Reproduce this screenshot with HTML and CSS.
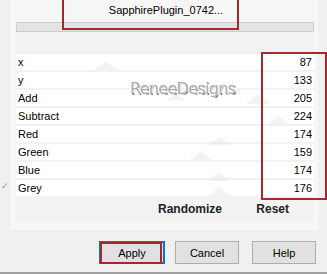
FILE: index.html
```html
<!DOCTYPE html>
<html lang="en">
<head>
  <meta charset="utf-8">
  <title>Sapphire Plugin Settings</title>
  <link rel="stylesheet" href="styles.css">
</head>
<body>
  <div class="window">
    <div class="main">
      <div class="side"><span class="tick">&#10003;</span></div>
      <div class="frame">
        <div class="panel">
          <div class="preset">SapphirePlugin_0742...</div>
          <div class="slider"></div>
          <div class="rows">
            <div class="row"><span>x</span><span>87</span></div>
            <div class="row"><span>y</span><span>133</span></div>
            <div class="row"><span>Add</span><span>205</span></div>
            <div class="row"><span>Subtract</span><span>224</span></div>
            <div class="row"><span>Red</span><span>174</span></div>
            <div class="row"><span>Green</span><span>159</span></div>
            <div class="row"><span>Blue</span><span>174</span></div>
            <div class="row"><span>Grey</span><span>176</span></div>
          </div>
          <div class="tools">
            <span class="randomize">Randomize</span>
            <span class="reset">Reset</span>
          </div>
          <svg class="shapes" width="298" height="223" viewBox="0 0 298 223">
            <polygon points="90,62 102,70 78,70" />
            <polygon points="242,94 254,104 230,104" />
            <polygon points="262,115 272,124 252,124" />
            <polygon points="203,137 215,145 191,145" />
            <polygon points="185,151 196,160 174,160" />
            <polygon points="203,172 214,181 192,181" />
            <polygon points="203,187 214,196 192,196" />
            <polygon points="160,94 170,100 150,100" />
          </svg>
          <div class="mark mark-preset"></div>
        </div>
      </div>
    </div>
    <div class="buttons">
      <button class="btn btn-default">Apply<span class="mark mark-apply"></span></button>
      <button class="btn">Cancel</button>
      <button class="btn btn-help">Help</button>
    </div>
    <div class="watermark">ReneeDesigns</div>
    <div class="mark mark-values"></div>
  </div>
</body>
</html>
```

FILE: styles.css
```css
body {
  margin: 0;
  background-color: #f0f0f0;
  font-family: "Liberation Sans", Arial, sans-serif;
  font-size: 11px;
  color: #000;
}
.window {
  position: relative;
  height: 272px;
  border-bottom: 2px solid #a0a0a0;
}
.main { display: flex; }
.side { width: 11px; position: relative; }
.tick {
  position: absolute;
  top: 181px;
  left: 1px;
  font-size: 9px;
  color: #9a9a9a;
}
.frame {
  width: 307px;
  height: 230px;
  padding: 0 5px 0 4px;
  background: #f7f7f7;
  border-left: 1px solid #fbfbfb;
  box-sizing: border-box;
}
.panel {
  position: relative;
  width: 298px;
  height: 223px;
  background: #f2f2f2;
}
.preset {
  height: 22px;
  line-height: 20px;
  text-align: center;
  background: #f6f6f6;
  padding-left: 2px;
}
.slider {
  height: 8px;
  background: #e4e4e4;
  border: 1px solid #cdcdcd;
}
.rows {
  margin-top: 22px;
  display: flex;
  flex-direction: column;
  gap: 2px;
}
.row {
  height: 16px;
  line-height: 16px;
  background: #fff;
  display: flex;
  justify-content: space-between;
  padding: 0 2px;
}
.tools {
  height: 26px;
  line-height: 26px;
  font-size: 12px;
  font-weight: bold;
  color: #222;
}
.randomize { margin-left: 142px; }
.reset { margin-left: 31px; }
.shapes {
  position: absolute;
  top: 0;
  left: 0;
  pointer-events: none;
}
.shapes polygon { fill: #e4e4e4; opacity: 0.45; }
.buttons {
  display: flex;
  justify-content: flex-end;
  gap: 10px;
  padding: 11px 11px 0 0;
}
.btn {
  position: relative;
  width: 64px;
  height: 23px;
  background: #e1e1e1;
  border: 1px solid #adadad;
  font-family: "Liberation Sans", Arial, sans-serif;
  font-size: 11px;
  color: #000;
  padding: 0;
}
.btn-default {
  width: 66px;
  border: 1px solid #0078d7;
  box-shadow: inset 0 0 0 1px #0078d7;
}
.btn-help { margin-left: 3px; }
.watermark {
  position: absolute;
  left: 130px;
  top: 79px;
  font-family: "DejaVu Sans", sans-serif;
  font-size: 16px;
  letter-spacing: -0.7px;
  color: #ababab;
  text-shadow: -1px -1px 0 #fff, 1px -1px 0 #fff, -1px 1px 0 #fff, 1px 1px 0 #6e6e6e;
  pointer-events: none;
}
.mark {
  position: absolute;
  border: 2px solid #a4282d;
  box-sizing: border-box;
  pointer-events: none;
}
.mark-preset { left: 46px; top: -2px; width: 177px; height: 32px; }
.mark-values { left: 261px; top: 52px; width: 66px; height: 148px; }
.mark-apply { left: 0; top: 0; width: 62px; height: 22px; }
```
